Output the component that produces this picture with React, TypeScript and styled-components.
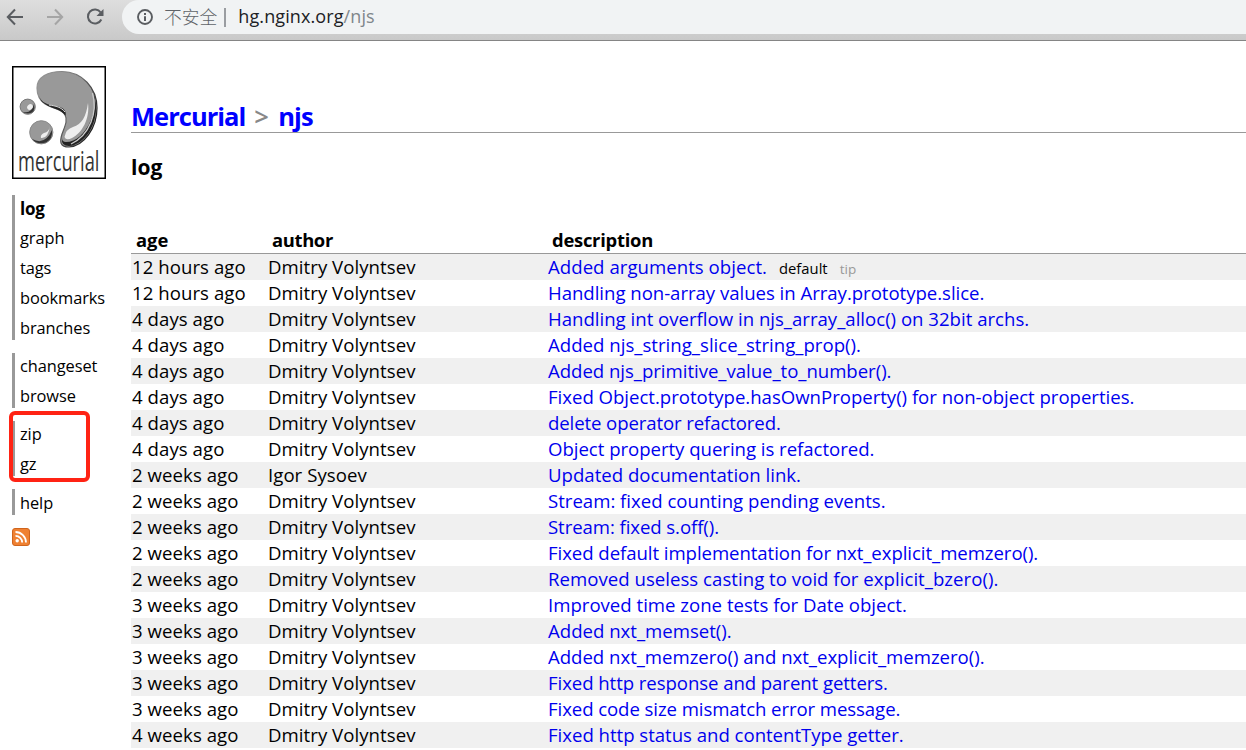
import React from "react";
import styled, { createGlobalStyle } from "styled-components";

const GlobalStyle = createGlobalStyle`
  * { box-sizing: border-box; }
  html, body { margin: 0; padding: 0; height: 750px; overflow: hidden; background: #fff; }
  body { font-family: "Open Sans", "Noto Sans", "Noto Sans CJK SC", sans-serif; color: #000; }
  a { text-decoration: none; color: inherit; }
`;

const Window = styled.div`
  width: 1246px;
  height: 750px;
  overflow: hidden;
`;

const Toolbar = styled.header`
  display: flex;
  align-items: flex-start;
  height: 41px;
  border-bottom: 1px solid #858585;
  background: linear-gradient(#dedede, #c9c9c9);
`;

const NavIcons = styled.svg`
  display: block;
  flex: none;
  width: 122px;
  height: 34px;
`;

const AddressBar = styled.div`
  display: flex;
  align-items: center;
  flex: 1;
  height: 34px;
  padding-left: 15px;
  border-radius: 17px 0 0 17px;
  background: #f1f3f4;
  white-space: nowrap;
`;

const InfoIcon = styled.svg`
  display: block;
  width: 16px;
  height: 16px;
`;

const Warning = styled.span`
  height: 34px;
  margin-left: 11px;
  font: 300 17.8px/32px "Noto Sans CJK SC", sans-serif;
  color: #5f6368;
`;

const Divider = styled.i`
  width: 2px;
  height: 19px;
  margin: 0 12px 0 7px;
  background: #9a9da1;
`;

const Url = styled.span`
  height: 34px;
  font-size: 18px;
  line-height: 32px;
  letter-spacing: 0.1px;
  color: #202124;
  span { color: #80868b; }
`;

const Page = styled.div`
  display: flex;
  align-items: flex-start;
`;

const Sidebar = styled.nav`
  flex: none;
  width: 131px;
  padding: 25px 0 0 12px;
`;

const Logo = styled.svg`
  display: block;
  width: 94px;
  height: 113px;
  margin-bottom: 16px;
`;

const Menu = styled.ul<{ $height: number }>`
  list-style: none;
  margin: 0 0 13px;
  padding: 0 0 0 5px;
  height: ${(p) => p.$height}px;
  border-left: 3px solid #999;
`;

const MenuItem = styled.li<{ $active?: boolean; $line?: number }>`
  height: 30px;
  font-size: ${(p) => (p.$active ? 17 : 16.4)}px;
  line-height: ${(p) => p.$line ?? 26}px;
  font-weight: ${(p) => (p.$active ? 700 : 400)};
  letter-spacing: ${(p) => (p.$active ? -0.2 : -0.08)}px;
  white-space: nowrap;
`;

const Highlighted = styled.div`
  position: relative;
`;

const HighlightBox = styled.div`
  position: absolute;
  left: -3px;
  top: -10px;
  width: 81px;
  height: 71px;
  border: 4px solid #ff2314;
  border-radius: 6px;
`;

const Feed = styled.svg`
  display: block;
  width: 18px;
  height: 18px;
`;

const Main = styled.main`
  flex: 1;
  min-width: 0;
`;

const Title = styled.h2`
  display: flex;
  height: 92px;
  margin: 0;
  padding-top: 57px;
  border-bottom: 1px solid #999;
  font-size: 25.5px;
  line-height: 36px;
  letter-spacing: -0.98px;
  color: #999;
  white-space: nowrap;
  a { color: #0000ff; }
`;

const Separator = styled.span`
  width: 33px;
  padding-left: 9px;
  color: #888;
  font-weight: 600;
`;

const Subtitle = styled.h3`
  height: 52px;
  margin: 17px 0 0;
  font-size: 21px;
  line-height: 34px;
`;

const Table = styled.div`
  margin-top: 26px;
`;

const Row = styled.div<{ $shaded?: boolean }>`
  display: grid;
  grid-template-columns: 136px 280px 1fr;
  height: 26px;
  padding-left: 1px;
  background: ${(p) => (p.$shaded ? "#f0f0f0" : "#fff")};
  font-size: 18.6px;
  line-height: 26px;
  white-space: nowrap;
`;

const HeadRow = styled(Row)`
  padding-left: 5px;
  border-bottom: 1px solid #999;
  font-size: 18.4px;
  line-height: 24px;
  font-weight: 700;
`;

const Cell = styled.span<{ $tracking?: number }>`
  letter-spacing: ${(p) => p.$tracking ?? 0}px;
`;

const Summary = styled.a<{ $tracking?: number }>`
  color: #0000ee;
  letter-spacing: ${(p) => p.$tracking ?? 0}px;
`;

const Tag = styled.span<{ $muted?: boolean }>`
  margin-left: 12px;
  font-size: ${(p) => (p.$muted ? 13.5 : 14.8)}px;
  color: ${(p) => (p.$muted ? "#999" : "#000")};
`;

type Entry = { age: string; author?: string; text: string; tracking?: number; tags?: boolean };

const entries: Entry[] = [
  { age: "12 hours ago", text: "Added arguments object.", tags: true, tracking: 0.04 },
  { age: "12 hours ago", text: "Handling non-array values in Array.prototype.slice.", tracking: -0.03 },
  { age: "4 days ago", text: "Handling int overflow in njs_array_alloc() on 32bit archs." },
  { age: "4 days ago", text: "Added njs_string_slice_string_prop().", tracking: 0.02 },
  { age: "4 days ago", text: "Added njs_primitive_value_to_number().", tracking: -0.03 },
  { age: "4 days ago", text: "Fixed Object.prototype.hasOwnProperty() for non-object properties.", tracking: -0.02 },
  { age: "4 days ago", text: "delete operator refactored.", tracking: -0.11 },
  { age: "4 days ago", text: "Object property quering is refactored.", tracking: -0.03 },
  { age: "2 weeks ago", author: "Igor Sysoev", text: "Updated documentation link." },
  { age: "2 weeks ago", text: "Stream: fixed counting pending events." },
  { age: "2 weeks ago", text: "Stream: fixed s.off().", tracking: -0.08 },
  { age: "2 weeks ago", text: "Fixed default implementation for nxt_explicit_memzero().", tracking: -0.06 },
  { age: "2 weeks ago", text: "Removed useless casting to void for explicit_bzero().", tracking: 0.03 },
  { age: "3 weeks ago", text: "Improved time zone tests for Date object." },
  { age: "3 weeks ago", text: "Added nxt_memset()." },
  { age: "3 weeks ago", text: "Added nxt_memzero() and nxt_explicit_memzero().", tracking: -0.02 },
  { age: "3 weeks ago", text: "Fixed http response and parent getters.", tracking: -0.07 },
  { age: "3 weeks ago", text: "Fixed code size mismatch error message.", tracking: -0.08 },
  { age: "4 weeks ago", text: "Fixed http status and contentType getter.", tracking: -0.02 },
];

function MercurialLogo() {
  return (
    <Logo viewBox="0 0 94 113">
      <defs>
        <linearGradient id="rim" x1="0" y1="0" x2="1" y2="0.6">
          <stop offset="0" stopColor="#999" />
          <stop offset="0.5" stopColor="#777" />
          <stop offset="1" stopColor="#222" />
        </linearGradient>
      </defs>
      <rect x="0.75" y="0.75" width="92.5" height="111.5" fill="#fff" stroke="#000" strokeWidth="1.5" />
      <path d="M25 22C25 11 36 5.500 50 5.500C70 5.500 85 22 85 42C85 62 72 80 57 81C48 81 47.500 76 50 68C53 60 56 54 53 49C50 43 41 43 33 38C27 34 25 28 25 22Z" fill="#999" stroke="url(#rim)" strokeWidth="1.200" />
      <path d="M27 30C31 41 43 38 50 42C54 45 54 47 53.500 50C50 43 40 43 33 38Q28 35 27 30Z" fill="#222" />
      <path d="M37 39C44 40 49 41 53 46" fill="none" stroke="#ddd" strokeWidth="1" />
      <path d="M79 22C84 32 84 43 79 54C73 68 64 76 54 76Q50 76 50 72Q49 80 57 80C71 79 84 62 84 42Q84 31 79 22Z" fill="#222" />
      <path d="M80.500 27C86 46 78 69 59 78" fill="none" stroke="#ccc" strokeWidth="1.300" />
      <path d="M76 37C74 51 70 58 61 61Q54 63 52.500 71Q54 75 60 72C70 67 78 53 76 37Z" fill="#eee" />
      <circle cx="15.700" cy="40.700" r="7.600" fill="#999" stroke="#777" strokeWidth="1" />
      <path d="M10 45.500Q19 49 22 38Q24 47 16 47.500Q12 47.500 10 45.500Z" fill="#333" />
      <ellipse cx="18" cy="41" rx="3" ry="2.500" fill="#eee" transform="rotate(-40 18 41)" />
      <circle cx="29.300" cy="66.300" r="11.600" fill="#999" stroke="#888" strokeWidth="1" />
      <path d="M20 73Q33 80 40 64Q41 73 34 76.500Q25 79 20 73Z" fill="#333" />
      <path d="M38 60Q37 66 32 67Q28 69 29 72Q36 73 38 60Z" fill="#eee" />
      <text transform="translate(6 105) scale(0.69 1)" fontFamily="Open Sans, sans-serif" fontSize="26.5" fill="#333">mercurial</text>
    </Logo>
  );
}

export default function App() {
  return (
    <Window>
      <GlobalStyle />
      <Toolbar>
        <NavIcons viewBox="0 0 122 34" fill="none" strokeWidth="2">
          <path d="M23 17H8M15 9.500L7.800 17L15 24.500" stroke="#5a5d61" />
          <path d="M47 17H62M55 9.500L62.200 17L55 24.500" stroke="#a5a5a5" />
          <path d="M100.700 12.500A7 7 0 1 0 101.300 19.500" stroke="#5a5d61" />
          <path d="M103.500 9V16H96.500Z" fill="#5a5d61" />
        </NavIcons>
        <AddressBar>
          <InfoIcon viewBox="0 0 16 16">
            <circle cx="8" cy="8" r="7" fill="none" stroke="#5a5d61" strokeWidth="1.900" />
            <path d="M7 4h2v2H7zM7 7.200h2V12H7z" fill="#5a5d61" />
          </InfoIcon>
          <Warning>不安全</Warning>
          <Divider />
          <Url>hg.nginx.org<span>/njs</span></Url>
        </AddressBar>
      </Toolbar>
      <Page>
        <Sidebar>
          <MercurialLogo />
          <Menu $height={145}>
            <MenuItem $active $line={28}>log</MenuItem>
            <MenuItem>graph</MenuItem>
            <MenuItem>tags</MenuItem>
            <MenuItem>bookmarks</MenuItem>
            <MenuItem>branches</MenuItem>
          </Menu>
          <Menu $height={55}>
            <MenuItem>changeset</MenuItem>
            <MenuItem>browse</MenuItem>
          </Menu>
          <Highlighted>
            <Menu $height={55}>
              <MenuItem>zip</MenuItem>
              <MenuItem>gz</MenuItem>
            </Menu>
            <HighlightBox />
          </Highlighted>
          <Menu $height={26}>
            <MenuItem $line={28}>help</MenuItem>
          </Menu>
          <Feed viewBox="0 0 18 18">
            <rect x="0.500" y="0.500" width="17" height="17" rx="2.500" fill="#ef8132" stroke="#d0641c" />
            <circle cx="5.200" cy="12.800" r="1.700" fill="#fff" />
            <path d="M3.500 7.800A6.700 6.700 0 0 1 10.200 14.500M3.500 4A10.500 10.500 0 0 1 14 14.500" fill="none" stroke="#fff" strokeWidth="1.800" />
          </Feed>
        </Sidebar>
        <Main>
          <Title><a href="#">Mercurial</a><Separator>&gt;</Separator><a href="#">njs</a></Title>
          <Subtitle>log</Subtitle>
          <Table>
            <HeadRow>
              <Cell>age</Cell>
              <Cell $tracking={-0.35}>author</Cell>
              <Cell $tracking={-0.25}>description</Cell>
            </HeadRow>
            {entries.map((e, i) => (
              <Row key={i} $shaded={i % 2 === 0}>
                <Cell $tracking={0.06}>{e.age}</Cell>
                <Cell $tracking={0.05}>{e.author ?? "Dmitry Volyntsev"}</Cell>
                <Cell>
                  <Summary href="#" $tracking={e.tracking}>{e.text}</Summary>
                  {e.tags && <><Tag>default</Tag><Tag $muted>tip</Tag></>}
                </Cell>
              </Row>
            ))}
          </Table>
        </Main>
      </Page>
    </Window>
  );
}
